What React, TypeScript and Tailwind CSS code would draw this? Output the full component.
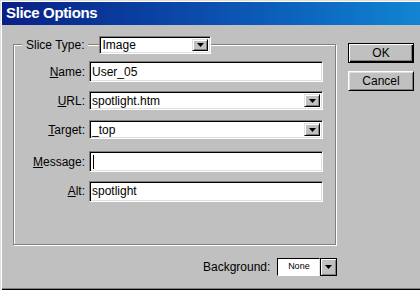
import React from "react";

const font = { fontFamily: '"Liberation Sans", Arial, sans-serif' };

const sunken =
  "border border-t-[#808080] border-l-[#808080] border-b-white border-r-white shadow-[inset_1px_1px_0_#000,inset_-1px_-1px_0_#dfdfdf]";

const Arrow = () => (
  <svg width="7" height="4" viewBox="0 0 7 4">
    <path d="M0 0h7L3.5 4z" fill="#000" />
  </svg>
);

const DropBtn = () => (
  <div className="flex h-full w-[16px] items-center justify-center border border-t-[#dfdfdf] border-l-[#dfdfdf] border-b-black border-r-black bg-[#c0c0c0] shadow-[inset_1px_1px_0_#fff,inset_-1px_-1px_0_#808080]">
    <Arrow />
  </div>
);

const Label = ({ k, rest }: { k: string; rest: string }) => (
  <span className="w-[72px] pr-[1px] text-right text-[12px] text-black">
    <u className="underline-offset-[1px]">{k}</u>
    {rest}
  </span>
);

const Input = ({ value, caret }: { value?: string; caret?: boolean }) => (
  <div className={`flex h-[21px] w-[234px] items-center bg-white pl-[2px] text-[12px] text-black ${sunken}`}>
    {caret && <span className="ml-[1px] h-[14px] w-px bg-black" />}
    {value}
  </div>
);

const Select = ({ value }: { value: string }) => (
  <div className={`flex h-[19px] w-[234px] items-center bg-white p-[2px] text-[12px] text-black ${sunken}`}>
    <span className="flex-1">{value}</span>
    <DropBtn />
  </div>
);

const Row = ({ children, className = "" }: { children: React.ReactNode; className?: string }) => (
  <div className={`flex h-[29px] items-center gap-[3px] ${className}`}>{children}</div>
);

export default function App() {
  return (
    <div
      style={font}
      className="relative h-[290px] w-[420px] overflow-hidden bg-[#c0c0c0] shadow-[inset_1px_1px_0_#dfdfdf,inset_2px_2px_0_#fff,inset_0_-1px_0_#000,inset_0_-2px_0_#808080]"
    >
      {/* Title bar */}
      <div className="ml-[2px] mt-[2px] flex h-[23px] items-center bg-linear-to-r from-[#0a1f86] via-[#0c4fae] to-[#1284d2] pl-[4px]">
        <span className="text-[15px] font-bold tracking-[-0.35px] text-white">Slice Options</span>
      </div>

      <div className="flex">
        {/* Group box */}
        <div className="relative ml-[13px] mt-[19px] h-[201px] w-[323px] border border-[#808080] shadow-[inset_1px_1px_0_#fff,1px_1px_0_#fff]">
          <div className="absolute left-[8px] top-[-9px] flex items-center">
            <span className="bg-[#c0c0c0] px-[4px] text-[12px] text-black">Slice Type:</span>
            <div className={`ml-[11px] flex h-[18px] w-[112px] items-center bg-white p-[2px] text-[12px] text-black ${sunken}`}>
              <span className="flex-1">Image</span>
              <DropBtn />
            </div>
          </div>

          <div className="mt-[12px] flex flex-col">
            <Row>
              <Label k="N" rest="ame:" />
              <Input value="User_05" />
            </Row>
            <Row>
              <Label k="U" rest="RL:" />
              <Select value="spotlight.htm" />
            </Row>
            <Row>
              <Label k="T" rest="arget:" />
              <Select value="_top" />
            </Row>
            <Row className="mt-[3px]">
              <Label k="M" rest="essage:" />
              <Input caret />
            </Row>
            <Row className="h-[30px]">
              <Label k="A" rest="lt:" />
              <Input value="spotlight" />
            </Row>
          </div>
        </div>

        {/* Buttons */}
        <div className="ml-[12px] mt-[18px] flex flex-col gap-[8px]">
          <div className="flex h-[20px] w-[66px] items-center justify-center border border-black bg-[#c0c0c0] text-[12px] text-black shadow-[inset_1px_1px_0_#fff,inset_-1px_-1px_0_#000,inset_-2px_-2px_0_#808080]">
            OK
          </div>
          <div className="flex h-[20px] w-[66px] items-center justify-center border border-t-white border-l-white border-b-black border-r-black bg-[#c0c0c0] text-[12px] text-black shadow-[inset_1px_1px_0_#dfdfdf,inset_-1px_-1px_0_#808080]">
            Cancel
          </div>
        </div>
      </div>

      {/* Background row */}
      <div className="ml-[203px] mt-[13px] flex items-center gap-[7px]">
        <span className="text-[12px] text-black">Background:</span>
        <div className="flex h-[18px] w-[60px]">
          <div className="flex h-full w-[43px] items-center justify-center border border-t-black border-l-black border-b-white border-r-[#dfdfdf] bg-white text-[9px] text-black">
            None
          </div>
          <div className="flex h-full w-[17px] items-center justify-center border border-black bg-[#c0c0c0] shadow-[inset_1px_1px_0_#fff,inset_-1px_-1px_0_#808080]">
            <Arrow />
          </div>
        </div>
      </div>
    </div>
  );
}
